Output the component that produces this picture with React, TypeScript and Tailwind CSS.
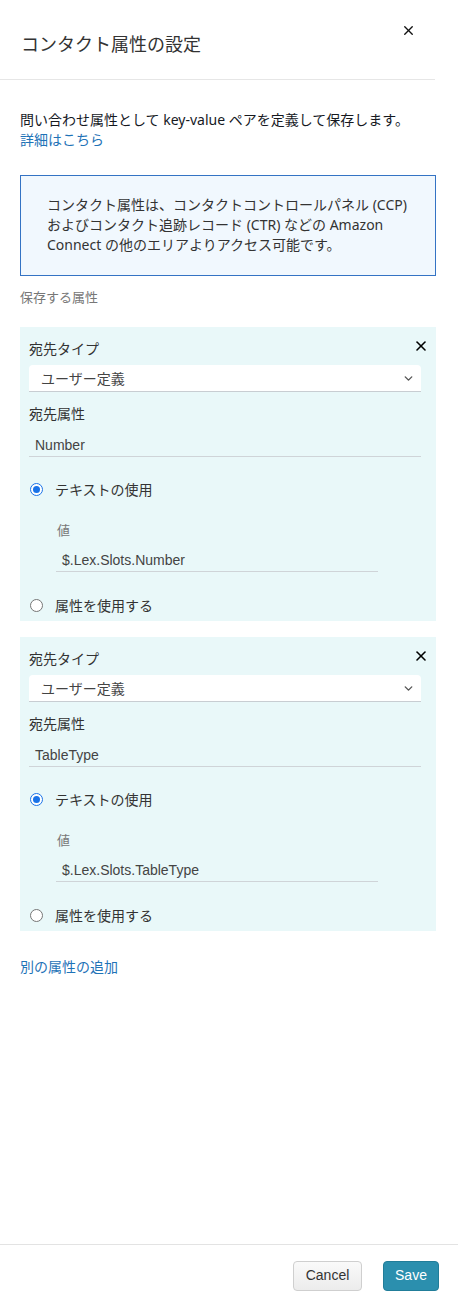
import { X, ChevronDown } from 'lucide-react';

const ui = { fontFamily: '"Noto Sans", "Noto Sans CJK JP", sans-serif' };
const field = { fontFamily: '"Liberation Sans", "Noto Sans CJK JP", sans-serif' };

type Attr = { key: string; value: string };

const attrs: Attr[] = [
  { key: 'Number', value: '$.Lex.Slots.Number' },
  { key: 'TableType', value: '$.Lex.Slots.TableType' },
];

function Radio({ checked, label }: { checked?: boolean; label: string }) {
  return (
    <div className="flex items-center h-5 pl-[1px]">
      {checked ? (
        <span className="w-[13px] h-[13px] rounded-full border-[1.5px] border-[#1a73e8] bg-white flex items-center justify-center">
          <span className="w-[7px] h-[7px] rounded-full bg-[#1a73e8]" />
        </span>
      ) : (
        <span className="w-[13px] h-[13px] rounded-full border border-[#767676] bg-white" />
      )}
      <span className="ml-[12px] text-[14px] text-[#333]">{label}</span>
    </div>
  );
}

function AttrCard({ a }: { a: Attr }) {
  return (
    <div className="bg-[#e9f8f9] pl-[9px] pr-[15px] pt-[11px] pb-[5px]">
      <div className="flex items-center justify-between h-5">
        <span className="text-[14px] text-[#333]">宛先タイプ</span>
        <X className="w-[16px] h-[16px] text-black mr-[-8px] mt-[-4px]" strokeWidth={2.4} />
      </div>
      <div className="mt-[7px] h-[27px] bg-white rounded-t-[4px] border-b border-[#c8cdd2] flex items-center justify-between pl-3 pr-[6px]">
        <span className="text-[14px] text-[#444]">ユーザー定義</span>
        <ChevronDown className="w-[13px] h-[13px] text-[#555]" strokeWidth={2.6} />
      </div>
      <div className="mt-[12px] h-5 text-[14px] text-[#333] leading-5">宛先属性</div>
      <div className="mt-[11px] h-[22px] border-b border-[#cfd4d8] pl-[6px] text-[14px] text-[#444] leading-[20px]" style={field}>
        {a.key}
      </div>
      <div className="mt-[22px]">
        <Radio checked label="テキストの使用" />
      </div>
      <div className="pl-[27px]">
        <div className="mt-[21px] h-5 text-[13px] text-[#777] leading-5 pl-[1px]">値</div>
        <div className="mt-[9px] w-[322px] h-[23px] border-b border-[#cfd4d8] pl-[6px] text-[14px] text-[#444] leading-[22px]" style={field}>
          {a.value}
        </div>
      </div>
      <div className="mt-[23px] pb-[1px]">
        <Radio label="属性を使用する" />
      </div>
    </div>
  );
}

export default function App() {
  return (
    <div className="w-[458px] h-[1306px] bg-white flex flex-col" style={ui}>
      <div className="w-[435px] h-[80px] border-b border-[#e6e6e6] relative shrink-0">
        <h1 className="pt-[31px] pl-[21px] text-[18px] leading-[26px] text-[#333] font-normal">コンタクト属性の設定</h1>
        <X className="absolute left-[401px] top-[23px] w-[15px] h-[15px] text-[#111]" strokeWidth={2.2} />
      </div>

      <div className="flex-1 px-5">
        <p className="mt-[30px] text-[14px] leading-5 text-[#16191f]">
          問い合わせ属性として key-value ペアを定義して保存します。
          <br />
          <a className="text-[#1f73b7]">詳細はこちら</a>
        </p>

        <div className="mt-[25px] w-[416px] border border-[#3473c4] bg-[#f1f8fe] pt-[19px] pb-[20px] px-[26px] text-[14px] leading-5 text-[#333]">
          コンタクト属性は、コンタクトコントロールパネル (CCP) およびコンタクト追跡レコード (CTR) などの Amazon Connect の他のエリアよりアクセス可能です。
        </div>

        <div className="mt-[11px] h-5 text-[13px] leading-5 text-[#777]">保存する属性</div>

        <div className="mt-[20px] w-[416px] flex flex-col gap-[16px]">
          {attrs.map((a) => (
            <AttrCard key={a.key} a={a} />
          ))}
        </div>

        <a className="block mt-[26px] h-5 text-[14px] leading-5 text-[#1f73b7]">別の属性の追加</a>
      </div>

      <div className="h-[62px] border-t border-[#e3e3e3] flex items-center justify-end pr-[19px] gap-[21px] shrink-0" style={field}>
        <button className="w-[69px] h-[30px] rounded-[4px] border border-[#cfcfcf] bg-gradient-to-b from-[#fafafa] to-[#ececec] text-[14px] text-[#333]">
          Cancel
        </button>
        <button className="w-[56px] h-[30px] rounded-[4px] border border-[#217d99] bg-[#2b8fae] text-[14px] text-white">
          Save
        </button>
      </div>
    </div>
  );
}
